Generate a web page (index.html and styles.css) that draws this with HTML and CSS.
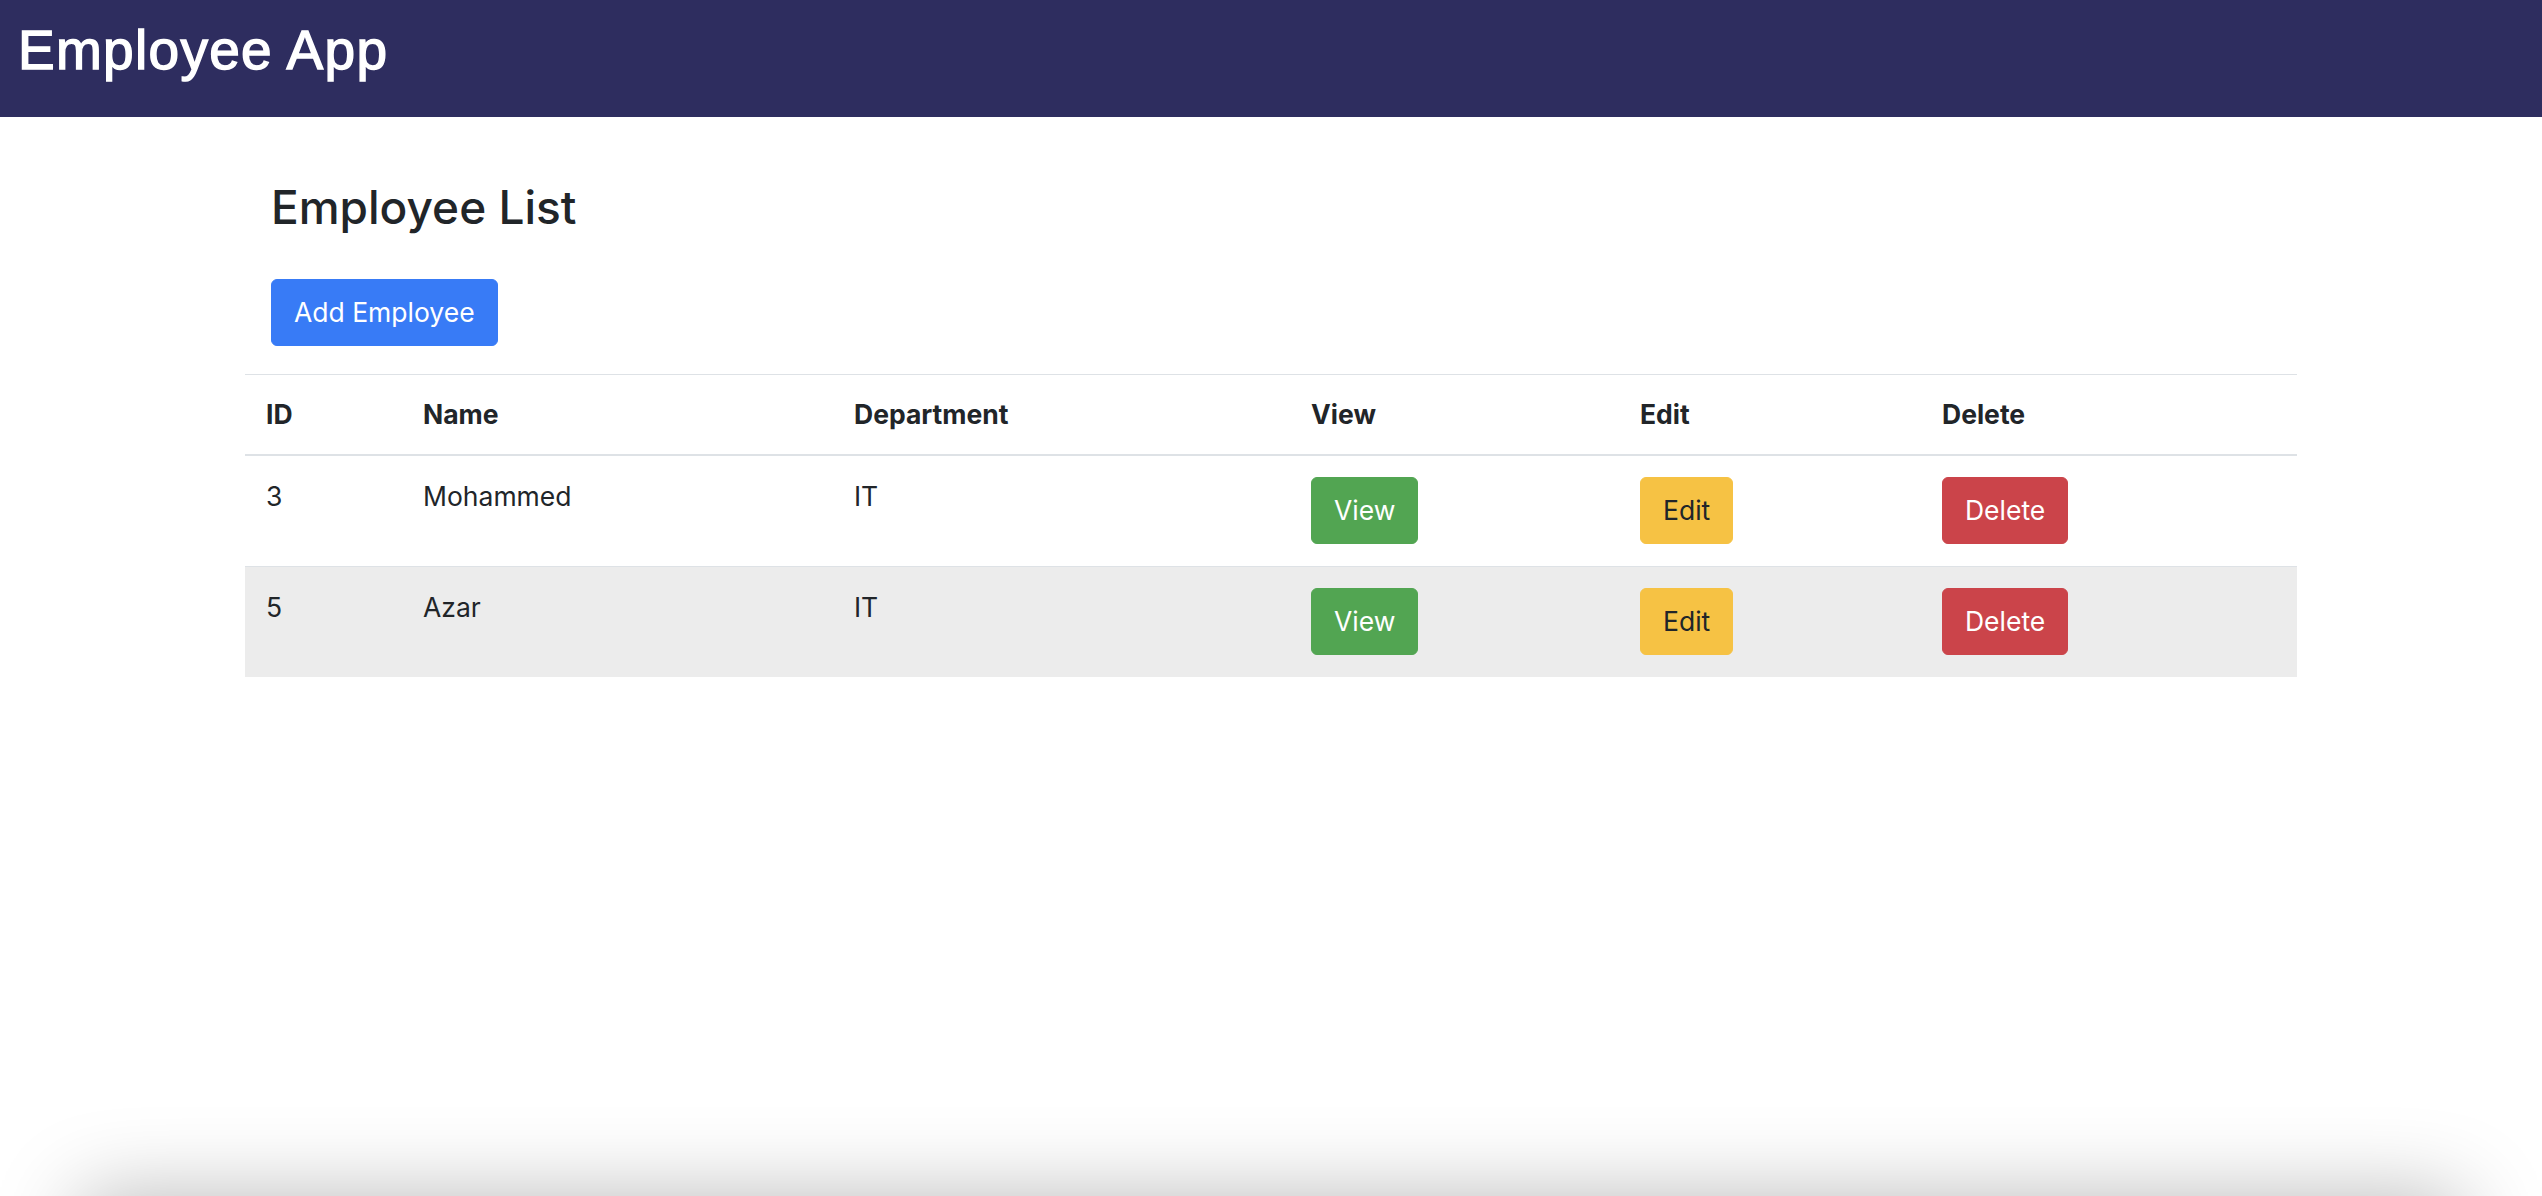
FILE: index.html
```html
<!DOCTYPE html>
<html lang="en">
<head>
<meta charset="utf-8">
<title>Employee App</title>
<link rel="stylesheet" href="styles.css">
</head>
<body>
<header class="navbar">
  <span class="brand">Employee App</span>
</header>
<main class="container">
  <div class="intro">
    <h2 class="page-title">Employee List</h2>
    <button class="btn btn-primary">Add Employee</button>
  </div>
  <table class="table">
    <colgroup>
      <col class="col-id">
      <col class="col-name">
      <col class="col-dept">
      <col class="col-view">
      <col class="col-edit">
      <col class="col-delete">
    </colgroup>
    <thead>
      <tr>
        <th>ID</th>
        <th>Name</th>
        <th>Department</th>
        <th>View</th>
        <th>Edit</th>
        <th>Delete</th>
      </tr>
    </thead>
    <tbody>
      <tr>
        <td>3</td>
        <td>Mohammed</td>
        <td>IT</td>
        <td><button class="btn btn-success">View</button></td>
        <td><button class="btn btn-warning">Edit</button></td>
        <td><button class="btn btn-danger">Delete</button></td>
      </tr>
      <tr class="alt">
        <td>5</td>
        <td>Azar</td>
        <td>IT</td>
        <td><button class="btn btn-success">View</button></td>
        <td><button class="btn btn-warning">Edit</button></td>
        <td><button class="btn btn-danger">Delete</button></td>
      </tr>
    </tbody>
  </table>
</main>
<div class="page-shadow"></div>
</body>
</html>
```
FILE: styles.css
```css
* {
  box-sizing: border-box;
}

html, body {
  margin: 0;
  padding: 0;
  background: #ffffff;
}

body {
  font-family: Inter, "Noto Sans", sans-serif;
  font-size: 26.5px;
  line-height: 1.5;
  color: #212529;
}

.navbar {
  height: 117px;
  background: #2e2d5f;
  padding: 19px 18px 0;
  display: flex;
  align-items: flex-start;
}

.brand {
  font-family: "Liberation Sans", Arial, sans-serif;
  font-size: 55px;
  line-height: 63px;
  color: #ffffff;
  font-weight: 400;
  letter-spacing: 1.3px;
  -webkit-text-stroke: 1.4px #ffffff;
}

.container {
  width: 2052px;
  margin: 0 auto;
}

.intro {
  display: flex;
  flex-direction: column;
  align-items: flex-start;
  padding-left: 26px;
}

.page-title {
  margin: 63px 0 44px;
  font-size: 46px;
  line-height: 1.2;
  font-weight: 500;
  color: #212529;
}

.btn {
  display: inline-block;
  font-family: Inter, "Noto Sans", sans-serif;
  font-size: 26.5px;
  line-height: 41px;
  padding: 12px 22px;
  border: 1px solid transparent;
  border-radius: 6px;
  cursor: pointer;
  font-weight: 400;
}

.btn-primary {
  background: #387bf6;
  border-color: #387bf6;
  color: #ffffff;
}

.btn-success {
  background: #52a552;
  border-color: #52a552;
  color: #ffffff;
}

.btn-warning {
  background: #f6c244;
  border-color: #f6c244;
  color: #212529;
}

.btn-danger {
  background: #cb444a;
  border-color: #cb444a;
  color: #ffffff;
}

.table {
  width: 100%;
  margin-top: 28px;
  border-collapse: collapse;
  table-layout: fixed;
}

.col-id { width: 157px; }
.col-name { width: 431px; }
.col-dept { width: 457px; }
.col-view { width: 329px; }
.col-edit { width: 302px; }
.col-delete { width: 376px; }

.table th,
.table td {
  text-align: left;
  vertical-align: top;
  padding: 21px 21px 22px;
  border-top: 1px solid #dee2e6;
}

.table thead th {
  padding: 20px 21px 19px;
  vertical-align: bottom;
  font-weight: 700;
  border-bottom: 2px solid #dee2e6;
}

.table tbody tr.alt td {
  background: #ececec;
}

.page-shadow {
  position: fixed;
  left: 80px;
  right: 80px;
  top: 100%;
  height: 200px;
  box-shadow: 0 0 85px 0 rgba(0, 0, 0, 0.28);
  pointer-events: none;
}
```
